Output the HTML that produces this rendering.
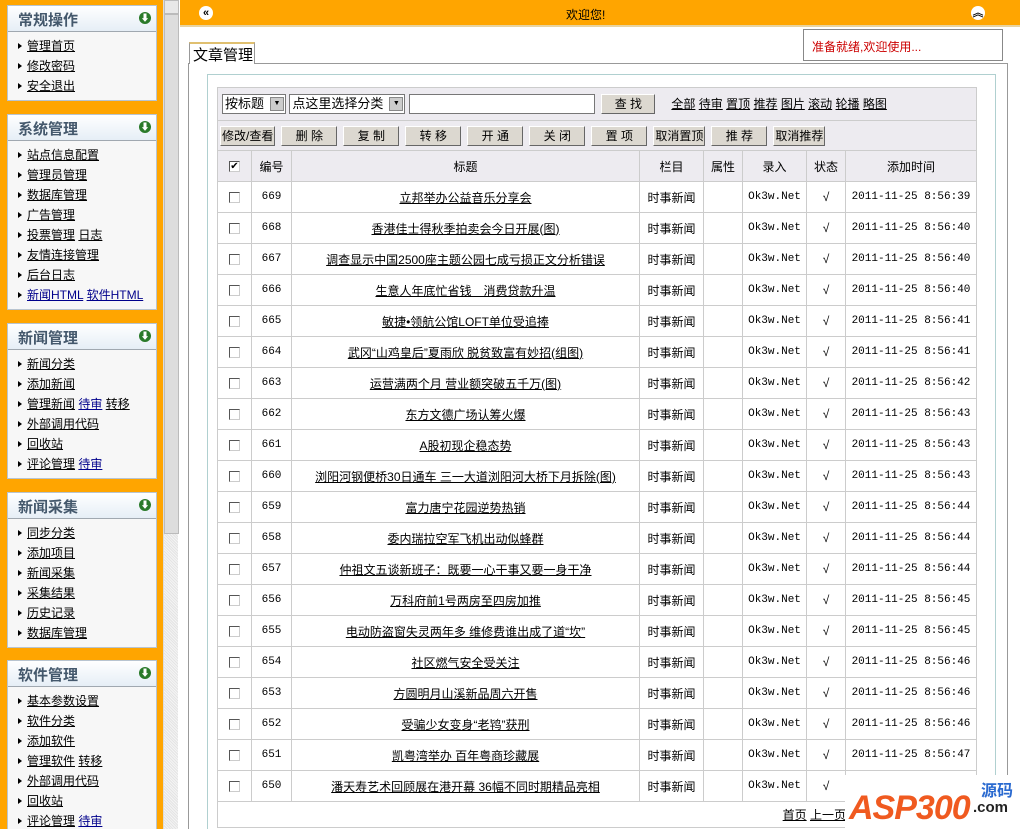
<!DOCTYPE html>
<html><head><meta charset="utf-8"><style>
*{margin:0;padding:0;box-sizing:border-box}
html,body{width:1020px;height:829px;overflow:hidden}
body{background:#fff;font-family:"Liberation Sans","Noto Sans CJK SC",sans-serif;font-size:12px;color:#000;position:relative}
a{color:#000;text-decoration:underline}
#side{position:absolute;left:0;top:0;width:163px;height:829px;background:#FFA500;overflow:hidden}
.pn{position:absolute;left:7px;width:150px;background:#F7F7F7;border:1px solid #b8c4d0}
.pn .h{height:26px;background:linear-gradient(#fff,#e6eef6);border-bottom:1px solid #a0a8b0;font-size:15px;font-weight:bold;color:#44586c;padding:3px 0 0 10px;position:relative}
.pn .h i{position:absolute;right:5px;top:6px;width:12px;height:12px;border-radius:50%;background:#2a7a2a;color:#fff;font-size:9px;line-height:12px;text-align:center;font-style:normal}
.pn ul{list-style:none;padding:4px 0 4px 10px}
.pn li{height:20px;line-height:20px;font-size:12px}
.pn li:before{content:"";display:inline-block;border-left:4px solid #000;border-top:3px solid transparent;border-bottom:3px solid transparent;margin-right:5px;vertical-align:1px}
.pn a.b{color:#00008b}
#sb{position:absolute;left:163px;top:0;width:15px;height:829px;background:repeating-linear-gradient(45deg,#e4e4e4 0 1px,#f4f4f4 1px 2px);border-left:1px solid #ddd}
#sb div{position:absolute;left:0;top:0;width:15px;height:14px;background:#e8e8e8;border:1px solid #bbb}
#sb .t{top:14px;height:520px;background:#ddd;border:1px solid #bbb}
#top{position:absolute;left:180px;top:0;width:840px;height:27px;background:#FFA500;border-bottom:2px solid #e8d3a0}
.ci{position:absolute;top:6px;width:14px;height:14px;border-radius:50%;background:#fff;font-size:11px;line-height:14px;text-align:center;font-weight:bold}
#tab{position:absolute;left:189px;top:42px;width:66px;height:22px;border:1px solid #999;border-bottom:none;border-top:2px solid #e0c070;font-size:15px;padding-left:3px;background:#fff;z-index:2}
#frame{position:absolute;left:188px;top:63px;width:820px;height:780px;border:1px solid #999}
#status{position:absolute;left:803px;top:29px;width:200px;height:32px;border:1px solid #888;background:#fff;color:#c00;font-size:12px;padding:8px 0 0 8px;z-index:3}
#inner{position:absolute;left:207px;top:74px;width:789px;height:760px;border:1px solid #b0d0d0}
table{position:absolute;left:217px;top:87px;border-collapse:collapse;width:760px}
td{border:1px solid #ccc;text-align:center;height:31px;font-size:12px}
tr.g td{background:#EDEBF0}
td.l{text-align:left;padding-left:4px}
.cb{display:inline-block;width:11px;height:11px;border:1px solid #555;border-right-color:#ccc;border-bottom-color:#ccc;background:#fff;vertical-align:middle}
.bt{display:inline-block;height:20px;line-height:18px;border:1px solid #888;border-color:#fff #666 #666 #fff;background:#dcd8d0;padding:0 5px;font-size:12px;margin-right:6px;text-align:center}
.sel{display:inline-block;height:20px;border:1px solid #777;background:#fff;font-size:13px;line-height:18px;padding-left:2px;vertical-align:middle;position:relative}
.sel b{position:absolute;right:1px;top:2px;width:14px;height:14px;background:#ccc;border:1px solid #888;font-size:7px;line-height:12px;text-align:center;font-weight:normal}
.m{font-family:"Liberation Mono",monospace;font-size:11px}
</style></head><body>
<div id="side">
<div class="pn" style="top:5px"><div class="h">常规操作<i>⬇</i></div><ul><li><a>管理首页</a></li><li><a>修改密码</a></li><li><a>安全退出</a></li></ul></div>
<div class="pn" style="top:114px"><div class="h">系统管理<i>⬇</i></div><ul><li><a>站点信息配置</a></li><li><a>管理员管理</a></li><li><a>数据库管理</a></li><li><a>广告管理</a></li><li><a>投票管理</a> <a>日志</a></li><li><a>友情连接管理</a></li><li><a>后台日志</a></li><li><a class="b">新闻HTML</a> <a class="b">软件HTML</a></li></ul></div>
<div class="pn" style="top:323px"><div class="h">新闻管理<i>⬇</i></div><ul><li><a>新闻分类</a></li><li><a>添加新闻</a></li><li><a>管理新闻</a> <a class="b">待审</a> <a>转移</a></li><li><a>外部调用代码</a></li><li><a>回收站</a></li><li><a>评论管理</a> <a class="b">待审</a></li></ul></div>
<div class="pn" style="top:492px"><div class="h">新闻采集<i>⬇</i></div><ul><li><a>同步分类</a></li><li><a>添加项目</a></li><li><a>新闻采集</a></li><li><a>采集结果</a></li><li><a>历史记录</a></li><li><a>数据库管理</a></li></ul></div>
<div class="pn" style="top:660px;height:200px"><div class="h">软件管理<i>⬇</i></div><ul><li><a>基本参数设置</a></li><li><a>软件分类</a></li><li><a>添加软件</a></li><li><a>管理软件</a> <a>转移</a></li><li><a>外部调用代码</a></li><li><a>回收站</a></li><li><a>评论管理</a> <a class="b">待审</a></li></ul></div>
</div>
<div id="sb"><div></div><div class="t"></div></div>
<div id="top"><span class="ci" style="left:19px">«</span><span style="position:absolute;left:386px;top:6px;font-size:12px">欢迎您!</span><span class="ci" style="left:791px">︽</span></div>
<div id="tab">文章管理</div>
<div id="frame"></div>
<div id="status">准备就绪,欢迎使用...</div>
<div id="inner"></div>
<table>
<tr class="g"><td colspan="8" class="l" style="height:33px"><span class="sel" style="width:64px">按标题<b>▼</b></span> <span class="sel" style="width:116px">点这里选择分类<b>▼</b></span> <span class="sel" style="width:186px"></span> &nbsp;<span class="bt" style="width:54px">查 找</span> &nbsp; <a>全部</a> <a>待审</a> <a>置顶</a> <a>推荐</a> <a>图片</a> <a>滚动</a> <a>轮播</a> <a>略图</a></td></tr>
<tr class="g"><td colspan="8" class="l" style="height:30px;padding-left:2px"><span class="bt" style="padding:0 1px">修改/查看</span><span class="bt" style="width:56px">删 除</span><span class="bt" style="width:56px">复 制</span><span class="bt" style="width:56px">转 移</span><span class="bt" style="width:56px">开 通</span><span class="bt" style="width:56px">关 闭</span><span class="bt" style="width:56px">置 项</span><span class="bt" style="padding:0 1px">取消置顶</span><span class="bt" style="width:56px">推 荐</span><span class="bt" style="padding:0 1px">取消推荐</span></td></tr>
<tr class="g"><td style="width:34px"><span class="cb" style="font-size:10px;line-height:9px">✔</span></td><td style="width:40px">编号</td><td style="width:348px">标题</td><td style="width:64px">栏目</td><td style="width:39px">属性</td><td style="width:64px">录入</td><td style="width:39px">状态</td><td>添加时间</td></tr>
<tr><td><span class="cb"></span></td><td class="m">669</td><td><a>立邦举办公益音乐分享会</a></td><td>时事新闻</td><td></td><td class="m">Ok3w.Net</td><td>√</td><td class="m">2011-11-25 8:56:39</td></tr>
<tr><td><span class="cb"></span></td><td class="m">668</td><td><a>香港佳士得秋季拍卖会今日开展(图)</a></td><td>时事新闻</td><td></td><td class="m">Ok3w.Net</td><td>√</td><td class="m">2011-11-25 8:56:40</td></tr>
<tr><td><span class="cb"></span></td><td class="m">667</td><td><a>调查显示中国2500座主题公园七成亏损正文分析错误</a></td><td>时事新闻</td><td></td><td class="m">Ok3w.Net</td><td>√</td><td class="m">2011-11-25 8:56:40</td></tr>
<tr><td><span class="cb"></span></td><td class="m">666</td><td><a>生意人年底忙省钱　消费贷款升温</a></td><td>时事新闻</td><td></td><td class="m">Ok3w.Net</td><td>√</td><td class="m">2011-11-25 8:56:40</td></tr>
<tr><td><span class="cb"></span></td><td class="m">665</td><td><a>敏捷•领航公馆LOFT单位受追捧</a></td><td>时事新闻</td><td></td><td class="m">Ok3w.Net</td><td>√</td><td class="m">2011-11-25 8:56:41</td></tr>
<tr><td><span class="cb"></span></td><td class="m">664</td><td><a>武冈“山鸡皇后”夏雨欣 脱贫致富有妙招(组图)</a></td><td>时事新闻</td><td></td><td class="m">Ok3w.Net</td><td>√</td><td class="m">2011-11-25 8:56:41</td></tr>
<tr><td><span class="cb"></span></td><td class="m">663</td><td><a>运营满两个月 营业额突破五千万(图)</a></td><td>时事新闻</td><td></td><td class="m">Ok3w.Net</td><td>√</td><td class="m">2011-11-25 8:56:42</td></tr>
<tr><td><span class="cb"></span></td><td class="m">662</td><td><a>东方文德广场认筹火爆</a></td><td>时事新闻</td><td></td><td class="m">Ok3w.Net</td><td>√</td><td class="m">2011-11-25 8:56:43</td></tr>
<tr><td><span class="cb"></span></td><td class="m">661</td><td><a>A股初现企稳态势</a></td><td>时事新闻</td><td></td><td class="m">Ok3w.Net</td><td>√</td><td class="m">2011-11-25 8:56:43</td></tr>
<tr><td><span class="cb"></span></td><td class="m">660</td><td><a>浏阳河钢便桥30日通车 三一大道浏阳河大桥下月拆除(图)</a></td><td>时事新闻</td><td></td><td class="m">Ok3w.Net</td><td>√</td><td class="m">2011-11-25 8:56:43</td></tr>
<tr><td><span class="cb"></span></td><td class="m">659</td><td><a>富力唐宁花园逆势热销</a></td><td>时事新闻</td><td></td><td class="m">Ok3w.Net</td><td>√</td><td class="m">2011-11-25 8:56:44</td></tr>
<tr><td><span class="cb"></span></td><td class="m">658</td><td><a>委内瑞拉空军飞机出动似蜂群</a></td><td>时事新闻</td><td></td><td class="m">Ok3w.Net</td><td>√</td><td class="m">2011-11-25 8:56:44</td></tr>
<tr><td><span class="cb"></span></td><td class="m">657</td><td><a>仲祖文五谈新班子：既要一心干事又要一身干净</a></td><td>时事新闻</td><td></td><td class="m">Ok3w.Net</td><td>√</td><td class="m">2011-11-25 8:56:44</td></tr>
<tr><td><span class="cb"></span></td><td class="m">656</td><td><a>万科府前1号两房至四房加推</a></td><td>时事新闻</td><td></td><td class="m">Ok3w.Net</td><td>√</td><td class="m">2011-11-25 8:56:45</td></tr>
<tr><td><span class="cb"></span></td><td class="m">655</td><td><a>电动防盗窗失灵两年多 维修费谁出成了道“坎”</a></td><td>时事新闻</td><td></td><td class="m">Ok3w.Net</td><td>√</td><td class="m">2011-11-25 8:56:45</td></tr>
<tr><td><span class="cb"></span></td><td class="m">654</td><td><a>社区燃气安全受关注</a></td><td>时事新闻</td><td></td><td class="m">Ok3w.Net</td><td>√</td><td class="m">2011-11-25 8:56:46</td></tr>
<tr><td><span class="cb"></span></td><td class="m">653</td><td><a>方圆明月山溪新品周六开售</a></td><td>时事新闻</td><td></td><td class="m">Ok3w.Net</td><td>√</td><td class="m">2011-11-25 8:56:46</td></tr>
<tr><td><span class="cb"></span></td><td class="m">652</td><td><a>受骗少女变身“老鸨”获刑</a></td><td>时事新闻</td><td></td><td class="m">Ok3w.Net</td><td>√</td><td class="m">2011-11-25 8:56:46</td></tr>
<tr><td><span class="cb"></span></td><td class="m">651</td><td><a>凯粤湾举办 百年粤商珍藏展</a></td><td>时事新闻</td><td></td><td class="m">Ok3w.Net</td><td>√</td><td class="m">2011-11-25 8:56:47</td></tr>
<tr><td><span class="cb"></span></td><td class="m">650</td><td><a>潘天寿艺术回顾展在港开幕 36幅不同时期精品亮相</a></td><td>时事新闻</td><td></td><td class="m">Ok3w.Net</td><td>√</td><td class="m">2011-11-25 8:56:48</td></tr>
<tr><td colspan="8" style="text-align:right;padding-right:130px;height:26px"><a>首页</a> <a>上一页</a></td></tr>
</table>
<div style="position:absolute;left:845px;top:775px;width:175px;height:54px;background:#fff">
<span style="position:absolute;left:4px;top:14px;font:italic bold 34px 'Liberation Sans',sans-serif;color:#f05a20;letter-spacing:-1px">ASP300</span>
<span style="position:absolute;left:136px;top:2px;font:bold 16px 'Liberation Sans','Noto Sans CJK SC',sans-serif;color:#2a6ad0">源码</span>
<span style="position:absolute;left:128px;top:24px;font:bold 15px 'Liberation Sans',sans-serif;color:#222">.com</span>
</div>
</body></html>
